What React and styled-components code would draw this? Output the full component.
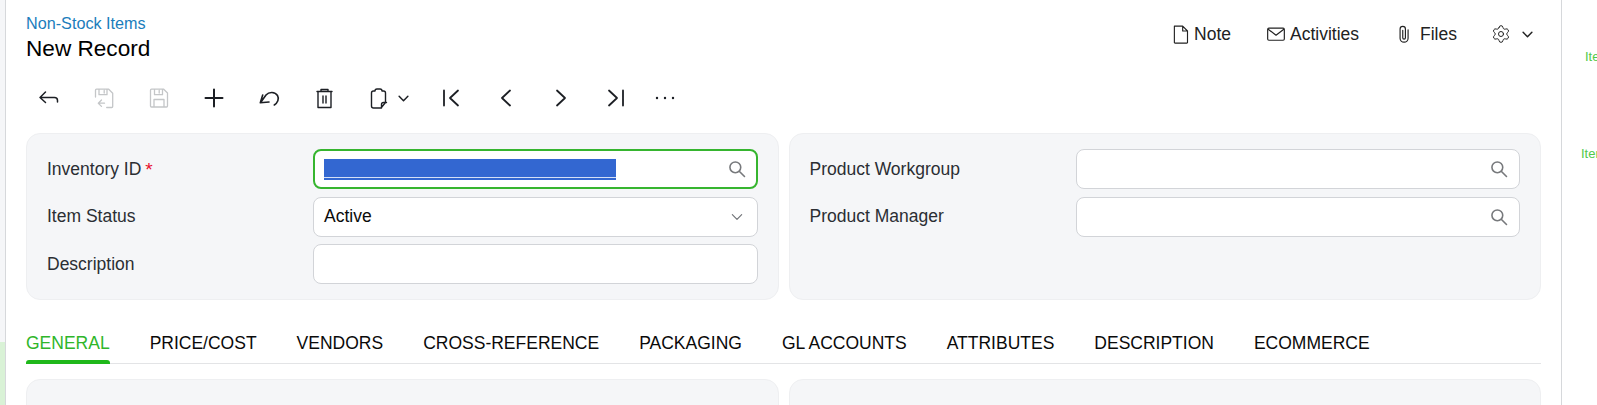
import React from "react";
import styled, {createGlobalStyle} from "styled-components";
import {Settings} from "lucide-react";

const GlobalStyle = createGlobalStyle`
  html, body {
    margin: 0;
    height: 405px;
    overflow: hidden;
    background: #fff;
    font-family: "Liberation Sans", Arial, sans-serif;
  }
`;

const Page = styled.div`
  display: flex;
  width: 1597px;
  height: 405px;
  overflow: hidden;
`;

const LeftRail = styled.div`
  width: 5px;
  display: flex;
  flex-direction: column;
  background: #f5f6f8;
  border-right: 1px solid #d6d8db;
`;

const RailTint = styled.div`
  margin-top: 342px;
  flex: 1;
  background: #d9f2d6;
`;

const Main = styled.main`
  flex: 1;
  min-width: 0;
  padding: 0 20px;
  border-right: 1px solid #d6d8db;
`;

const RightRail = styled.aside`
  width: 35px;
  overflow: hidden;
  white-space: nowrap;
  padding-top: 50px;
  color: #4fc94a;
  font-size: 13px;
`;

const RailLabel = styled.div`
  height: 14px;
  line-height: 14px;
  margin-left: ${(p) => p.$left}px;
  margin-bottom: ${(p) => p.$below || 0}px;
`;

const Header = styled.header`
  height: 75px;
  display: flex;
  justify-content: space-between;
`;

const Titles = styled.div`
  padding-top: 14px;
`;

const Crumb = styled.a`
  display: block;
  height: 19px;
  line-height: 19px;
  font-size: 16.2px;
  color: #1b7dbc;
`;

const Title = styled.h1`
  margin: 3px 0 0;
  height: 26px;
  line-height: 26px;
  font-size: 22.6px;
  font-weight: 400;
  color: #000;
`;

const HeaderActions = styled.div`
  display: flex;
  align-items: center;
  height: 68px;
  padding-right: 6px;
  color: #222;
  font-size: 17.5px;
`;

const HeaderAction = styled.div`
  display: flex;
  align-items: center;
  gap: ${(p) => p.$gap || 3}px;
  margin-left: ${(p) => p.$left}px;
`;

const Toolbar = styled.div`
  display: flex;
  align-items: center;
  height: 46px;
  margin-left: -5px;
  margin-bottom: 12px;
`;

const ToolButton = styled.button`
  width: ${(p) => p.$width || 55}px;
  height: 46px;
  padding: 0;
  border: 0;
  background: none;
  display: flex;
  align-items: center;
  justify-content: center;
  color: ${(p) => (p.disabled ? "#c4c6c8" : "#1c1f24")};
`;

const MenuToolButton = styled(ToolButton)`
  justify-content: flex-start;
  padding-left: 15px;
  gap: 6px;
`;

const FormRow = styled.div`
  display: grid;
  grid-template-columns: 1fr 1fr;
  column-gap: 10px;
`;

const Panel = styled.section`
  height: 167px;
  box-sizing: border-box;
  padding: 15px 20px 0;
  background: #f5f6f8;
  border: 1px solid #eeeff1;
  border-radius: 14px;
`;

const Field = styled.div`
  display: grid;
  grid-template-columns: 266px 1fr;
  align-items: center;
  margin-bottom: 7.5px;
`;

const Label = styled.label`
  font-size: 17.5px;
  color: #2b2e33;
`;

const Required = styled.span`
  color: #e8112d;
  margin-left: 4px;
  font-size: 19px;
  line-height: 1;
  position: relative;
  top: 1px;
`;

const Input = styled.div`
  height: 40px;
  box-sizing: border-box;
  display: flex;
  align-items: center;
  justify-content: space-between;
  padding: 0 10px;
  background: #fff;
  border: 1px solid #d2d4d8;
  border-radius: 8px;
  font-size: 17.5px;
  color: #0b0b0b;
  ${(p) =>
    p.$focused &&
    `
    border: 2px solid #36b52f;
    padding: 0 9px;
  `}
`;

const Selection = styled.div`
  width: 292px;
  height: 21px;
  background: linear-gradient(#3367d1 0 18px, #d5e0f6 18px 19px, #3367d1 19px);
`;

const Caret = styled.span`
  display: flex;
  margin-right: 2px;
`;

const Tabs = styled.nav`
  display: flex;
  gap: 40px;
  margin-top: 27px;
  height: 36px;
  border-bottom: 1px solid #e3e4e6;
`;

const Tab = styled.div`
  position: relative;
  height: 37px;
  box-sizing: border-box;
  padding-top: 6px;
  font-size: 17.5px;
  line-height: 20px;
  color: ${(p) => (p.$active ? "#2fb62a" : "#0a0a0a")};

  &::after {
    content: "";
    display: ${(p) => (p.$active ? "block" : "none")};
    position: absolute;
    left: 0;
    right: 0;
    bottom: 0;
    height: 4px;
    background: #1fb81a;
    border-radius: 3px 3px 0 0;
  }
`;

const LowerRow = styled(FormRow)`
  margin-top: 15px;
`;

const LowerPanel = styled.section`
  height: 60px;
  background: #f5f6f8;
  border: 1px solid #eeeff1;
  border-radius: 14px;
`;

const Icon = ({size = 24, stroke = 1.5, children}) => (
  <svg
    width={size}
    height={size}
    viewBox="0 0 24 24"
    fill="none"
    stroke="currentColor"
    strokeWidth={stroke}
    strokeLinecap="round"
    strokeLinejoin="round"
  >
    {children}
  </svg>
);

const SearchIcon = () => (
  <Icon size={20} stroke={1.9}>
    <circle cx="10" cy="10" r="6.5" stroke="#77797c" />
    <path d="M15 15l6 6" stroke="#77797c" />
  </Icon>
);

const ChevronDown = ({size = 15, stroke = 2.4, color = "currentColor"}) => (
  <Icon size={size} stroke={stroke}>
    <path d="M5 8.5l7 7 7-7" stroke={color} />
  </Icon>
);

const fields = {
  left: ["Inventory ID", "Item Status", "Description"],
  right: ["Product Workgroup", "Product Manager"],
};

const tabs = [
  "GENERAL",
  "PRICE/COST",
  "VENDORS",
  "CROSS-REFERENCE",
  "PACKAGING",
  "GL ACCOUNTS",
  "ATTRIBUTES",
  "DESCRIPTION",
  "ECOMMERCE",
];

export default function App() {
  return (
    <Page>
      <GlobalStyle />
      <LeftRail>
        <RailTint />
      </LeftRail>
      <Main>
        <Header>
          <Titles>
            <Crumb>Non-Stock Items</Crumb>
            <Title>New Record</Title>
          </Titles>
          <HeaderActions>
            <HeaderAction>
              <Icon size={21} stroke={1.3}>
                <path d="M5 2.5h9.5L20 8v13a.8.8 0 0 1-.8.8H5.8A.8.8 0 0 1 5 21V2.5zM14.5 2.5V8H20" />
              </Icon>
              Note
            </HeaderAction>
            <HeaderAction $left={35} $gap={4}>
              <Icon size={20} stroke={1.4}>
                <rect x="2" y="5" width="20" height="14.5" rx="1.5" />
                <path d="M3 6.5l9 7 9-7" />
              </Icon>
              Activities
            </HeaderAction>
            <HeaderAction $left={35} $gap={6}>
              <Icon size={20} stroke={1.4}>
                <path d="M10.5 7.5v9a1.6 1.6 0 0 0 3.2 0V6a3.2 3.2 0 0 0-6.4 0v11a4.8 4.8 0 0 0 9.6 0V7" />
              </Icon>
              Files
            </HeaderAction>
            <HeaderAction $left={34} $gap={9}>
              <Settings size={20} strokeWidth={1.2} />
              <ChevronDown size={15} />
            </HeaderAction>
          </HeaderActions>
        </Header>

        <Toolbar>
          <ToolButton>
            <Icon size={24}>
              <path d="M8.5 6L3 11.5l5.5 5M3 11.5h14.5a3 3 0 0 1 3 3V16" />
            </Icon>
          </ToolButton>
          <ToolButton disabled>
            <Icon size={24} stroke={1.3}>
              <path d="M3.5 11V4.2a1 1 0 0 1 1-1h12.2l4 4v13.3a1 1 0 0 1-1 1h-5M7 3.5v5.2h8V3.5M12.2 4.5v2.5M9.5 14l-3.2 3.2 3.2 3.2M6.5 17.2h6" />
            </Icon>
          </ToolButton>
          <ToolButton disabled>
            <Icon size={24} stroke={1.3}>
              <path d="M4.5 3.2h12.2l3.8 3.8v13a1 1 0 0 1-1 1H4.5a1 1 0 0 1-1-1V4.2a1 1 0 0 1 1-1zM7.5 3.5v5.2h8V3.5M12.2 4.5v2.5M7 21v-7.5h10V21" />
            </Icon>
          </ToolButton>
          <ToolButton>
            <Icon size={24} stroke={2}>
              <path d="M12 3.5v17M3.5 12h17" />
            </Icon>
          </ToolButton>
          <ToolButton>
            <Icon size={24} stroke={1.6}>
              <path d="M5.7 9L3.3 16.700 12 16M3.800 16.200L9 9c3-3.500 9-3.500 11.500.5 2 3.500 0 7.500-3.200 9.500" />
            </Icon>
          </ToolButton>
          <ToolButton>
            <Icon size={24} stroke={1.4}>
              <path d="M5 5.5h15M9 5.5V3.5h7v2M6 5.5v16h13v-16M11 10v7M14 10v7" />
            </Icon>
          </ToolButton>
          <MenuToolButton $width={72}>
            <Icon size={24} stroke={1.4}>
              <path d="M9 5c0-1.500 1-2 2-2h3c1 0 2 .5 2 2h1.500a2 2 0 0 1 2 2v9.500L15 22H7.500a2 2 0 0 1-2-2V7a2 2 0 0 1 2-2zM20.500 16.500h-3a2 2 0 0 0-2 2V22" />
            </Icon>
            <ChevronDown size={15} />
          </MenuToolButton>
          <ToolButton>
            <Icon size={24} stroke={1.8}>
              <path d="M5 4.500v15M19 4.500l-8 7.500 8 7.500" />
            </Icon>
          </ToolButton>
          <ToolButton>
            <Icon size={24} stroke={1.8}>
              <path d="M16 4.500L8 12l8 7.500" />
            </Icon>
          </ToolButton>
          <ToolButton>
            <Icon size={24} stroke={1.8}>
              <path d="M8 4.500l8 7.500-8 7.500" />
            </Icon>
          </ToolButton>
          <ToolButton>
            <Icon size={24} stroke={1.8}>
              <path d="M19 4.500v15M5 4.500l8 7.500-8 7.500" />
            </Icon>
          </ToolButton>
          <ToolButton $width={43}>
            <Icon size={24} stroke={2.4}>
              <path d="M4 12h.01M12 12h.01M20 12h.01" />
            </Icon>
          </ToolButton>
        </Toolbar>

        <FormRow>
          <Panel>
            <Field>
              <Label>
                {fields.left[0]}
                <Required>*</Required>
              </Label>
              <Input $focused>
                <Selection />
                <SearchIcon />
              </Input>
            </Field>
            <Field>
              <Label>{fields.left[1]}</Label>
              <Input>
                Active
                <Caret>
                  <ChevronDown size={16} stroke={1.7} color="#6f7276" />
                </Caret>
              </Input>
            </Field>
            <Field>
              <Label>{fields.left[2]}</Label>
              <Input />
            </Field>
          </Panel>
          <Panel>
            {fields.right.map((label) => (
              <Field key={label}>
                <Label>{label}</Label>
                <Input>
                  <span />
                  <SearchIcon />
                </Input>
              </Field>
            ))}
          </Panel>
        </FormRow>

        <Tabs>
          {tabs.map((tab, index) => (
            <Tab key={tab} $active={index === 0}>
              {tab}
            </Tab>
          ))}
        </Tabs>

        <LowerRow>
          <LowerPanel />
          <LowerPanel />
        </LowerRow>
      </Main>
      <RightRail>
        <RailLabel $left={23} $below={83}>Item</RailLabel>
        <RailLabel $left={19}>Item</RailLabel>
      </RightRail>
    </Page>
  );
}
